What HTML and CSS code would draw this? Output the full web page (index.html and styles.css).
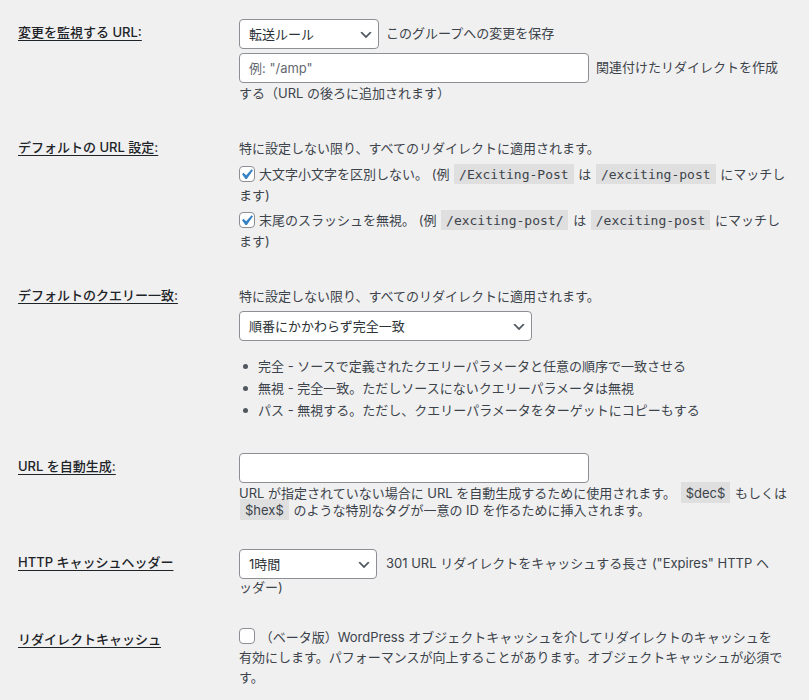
FILE: index.html
```html
<!DOCTYPE html>
<html lang="ja">
<head>
    <meta charset="UTF-8">
    <meta name="viewport" content="width=device-width, initial-scale=1.0">
    <title>Redirection 設定</title>
    <link rel="stylesheet" href="styles.css">
</head>
<body>
    <div class="wrap">

        <div class="row">
            <div class="rowLabel"><label>変更を監視する URL:</label></div>
            <div class="rowField">
                <div class="line">
                    <span class="selectWrap"><select class="sel sel-short"><option>転送ルール</option></select><svg class="chev" viewBox="0 0 20 20"><path d="M5 6l5 5 5-5 2 1-7 7-7-7 2-1z"/></svg></span><span class="after">このグループへの変更を保存</span>
                </div>
                <p class="withInput"><input type="text" class="txt" placeholder='例: "/amp"'><span class="after">関連付けたリダイレクトを作成<br>する（URL の後ろに追加されます）</span></p>
            </div>
        </div>

        <div class="row">
            <div class="rowLabel"><label>デフォルトの URL 設定:</label></div>
            <div class="rowField">
                <p class="first">特に設定しない限り、すべてのリダイレクトに適用されます。</p>
                <p class="check"><span class="cb"><svg viewBox="2.86 1.9 15.24 15.24"><path d="M14.83 4.89l1.34.94-5.81 8.38H9.02L5.78 9.67l1.34-1.25 2.57 2.4z"/></svg></span>大文字小文字を区別しない。 (例 <code>/Exciting-Post</code> は <code>/exciting-post</code> にマッチし<br>ます)</p>
                <p class="check"><span class="cb"><svg viewBox="2.86 1.9 15.24 15.24"><path d="M14.83 4.89l1.34.94-5.81 8.38H9.02L5.78 9.67l1.34-1.25 2.57 2.4z"/></svg></span>末尾のスラッシュを無視。 (例 <code>/exciting-post/</code> は <code>/exciting-post</code> にマッチし<br>ます)</p>
            </div>
        </div>

        <div class="row">
            <div class="rowLabel"><label>デフォルトのクエリー一致:</label></div>
            <div class="rowField">
                <p class="first">特に設定しない限り、すべてのリダイレクトに適用されます。</p>
                <div class="selLine">
                    <span class="selectWrap"><select class="sel sel-long"><option>順番にかかわらず完全一致</option></select><svg class="chev" viewBox="0 0 20 20"><path d="M5 6l5 5 5-5 2 1-7 7-7-7 2-1z"/></svg></span>
                </div>
                <ul class="bullets">
                    <li>完全 - ソースで定義されたクエリーパラメータと任意の順序で一致させる</li>
                    <li>無視 - 完全一致。ただしソースにないクエリーパラメータは無視</li>
                    <li>パス - 無視する。ただし、クエリーパラメータをターゲットにコピーもする</li>
                </ul>
            </div>
        </div>

        <div class="row">
            <div class="rowLabel"><label>URL を自動生成:</label></div>
            <div class="rowField">
                <input type="text" class="txt">
                <p class="desc">URL が指定されていない場合に URL を自動生成するために使用されます。 <code class="plain">$dec$</code> もしくは<br><code class="plain">$hex$</code> のような特別なタグが一意の ID を作るために挿入されます。</p>
            </div>
        </div>

        <div class="row">
            <div class="rowLabel"><label>HTTP キャッシュヘッダー</label></div>
            <div class="rowField">
                <p class="selText"><span class="selectWrap"><select class="sel sel-short2"><option>1時間</option></select><svg class="chev" viewBox="0 0 20 20"><path d="M5 6l5 5 5-5 2 1-7 7-7-7 2-1z"/></svg></span><span class="after wide">301 URL リダイレクトをキャッシュする長さ ("Expires" HTTP ヘ<br>ッダー)</span></p>
            </div>
        </div>

        <div class="row">
            <div class="rowLabel"><label>リダイレクトキャッシュ</label></div>
            <div class="rowField">
                <p class="cache"><span class="cb empty"></span> （ベータ版）WordPress オブジェクトキャッシュを介してリダイレクトのキャッシュを<br>有効にします。パフォーマンスが向上することがあります。オブジェクトキャッシュが必須で<br>す。</p>
            </div>
        </div>

    </div>
</body>
</html>
```

FILE: styles.css
```css
body {
    margin: 0;
    background-color: #f0f0f1;
    font-family: Inter, "Noto Sans CJK JP", sans-serif;
    font-size: 13px;
    color: #3c434a;
}

.wrap {
    padding: 4px 9px 0 18px;
}

/* one settings row: label column + field column */
.row {
    display: grid;
    grid-template-columns: 211px 1fr;
}

.rowLabel {
    padding: 20px 10px 20px 0;
    line-height: 17px;
    font-weight: 500;
    color: #1d2327;
}

.rowLabel label {
    text-decoration: underline;
    text-underline-offset: 3px;
    text-decoration-thickness: 1px;
}

.rowField {
    padding: 15px 10px;
    line-height: 21px;
}

.rowField p {
    margin: 0;
}

/* selects */
.selectWrap {
    position: relative;
    display: inline-block;
    vertical-align: middle;
}

.sel {
    appearance: none;
    -webkit-appearance: none;
    display: block;
    height: 30px;
    margin: 0;
    padding: 0 24px 0 9px;
    border: 1px solid #8c8f94;
    border-radius: 4px;
    background-color: #fff;
    color: #2c3338;
    font-family: Inter, "Noto Sans CJK JP", sans-serif;
    font-size: 13px;
    box-sizing: border-box;
}

.sel-short { width: 140px; }
.sel-short2 { width: 138px; }
.sel-long { width: 293px; }

.chev {
    position: absolute;
    right: 5px;
    top: 8px;
    width: 16px;
    height: 16px;
    fill: #50575e;
    pointer-events: none;
}

.after {
    margin-left: 7px;
}

.after.wide {
    margin-left: 9px;
}

.line {
    height: 30px;
}

.withInput {
    margin-top: 4px !important;
}

/* text inputs */
.txt {
    width: 350px;
    height: 30px;
    margin: 0;
    padding: 0 9px;
    border: 1px solid #8c8f94;
    border-radius: 4px;
    background-color: #fff;
    font-family: Inter, "Noto Sans CJK JP", sans-serif;
    font-size: 13px;
    color: #2c3338;
    box-sizing: border-box;
    vertical-align: middle;
}

.rowField > .txt {
    display: block;
}

.txt::placeholder {
    color: #646970;
}

.first {
    margin-top: 4px !important;
}

/* checkbox rows */
.check {
    margin-top: 5px !important;
}

.check + .check {
    margin-top: 4px !important;
}

.cb {
    display: inline-block;
    width: 16px;
    height: 16px;
    margin: -3px 4px 0 0;
    border: 1px solid #8c8f94;
    border-radius: 4px;
    background-color: #fff;
    box-sizing: border-box;
    vertical-align: middle;
    overflow: hidden;
}

.cb svg {
    display: block;
    width: 16px;
    height: 16px;
    margin: -1px;
    fill: #3582c4;
}

code {
    font-family: "DejaVu Sans Mono", monospace;
    font-size: 13px;
    padding: 3px 5px 2px;
    margin: 0 1px;
    background-color: rgba(0, 0, 0, .07);
    color: #3c434a;
}

code.plain {
    font-family: Inter, sans-serif;
    font-size: 13px;
}

.selLine {
    margin-top: 4px;
    height: 30px;
}

.bullets {
    list-style: none;
    margin: 14px 0 2px;
    padding: 0;
    line-height: 22px;
}

.bullets li {
    display: flex;
}

.bullets li::before {
    content: "";
    flex: none;
    width: 5px;
    height: 5px;
    margin: 9px 10px 0 4px;
    border-radius: 50%;
    background-color: #50575e;
}

.desc {
    margin-top: 2px !important;
    line-height: 17px;
}

.selText {
    line-height: 17px;
}

.cache {
    margin-top: 1px !important;
    line-height: 20px;
}

.cache .cb {
    margin: -4px 1px 0 0;
}
```
